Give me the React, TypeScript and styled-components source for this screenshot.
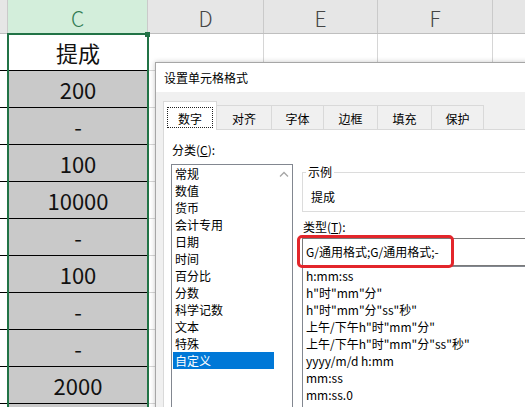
import React from 'react';
import styled, { createGlobalStyle, css } from 'styled-components';

const Global = createGlobalStyle`
  html, body { margin: 0; padding: 0; background: #fff; }
  body {
    width: 525px; height: 407px; overflow: hidden;
    font-family: "Noto Sans CJK SC", "Noto Sans", sans-serif;
  }
  * { box-sizing: border-box; }
`;

type ColKind = 'edge' | 'sel' | 'grid';
const COLS: { key: string; w: number; label: string; kind: ColKind }[] = [
  { key: 'B', w: 8, label: '', kind: 'edge' },
  { key: 'C', w: 140, label: 'C', kind: 'sel' },
  { key: 'D', w: 116, label: 'D', kind: 'grid' },
  { key: 'E', w: 114, label: 'E', kind: 'grid' },
  { key: 'F', w: 115, label: 'F', kind: 'grid' },
  { key: 'G', w: 120, label: '', kind: 'grid' },
];

const VALUES = ['提成', '200', '-', '100', '10000', '-', '100', '-', '-', '2000', ''];

const CATEGORIES = ['常规', '数值', '货币', '会计专用', '日期', '时间', '百分比', '分数', '科学记数', '文本', '特殊', '自定义'];
const FORMATS = [
  'h:mm:ss',
  'h"时"mm"分"',
  'h"时"mm"分"ss"秒"',
  '上午/下午h"时"mm"分"',
  '上午/下午h"时"mm"分"ss"秒"',
  'yyyy/m/d h:mm',
  'mm:ss',
  'mm:ss.0',
];
const TABS = [
  { label: '数字', w: 54 },
  { label: '对齐', w: 55 },
  { label: '字体', w: 52 },
  { label: '边框', w: 54 },
  { label: '填充', w: 54 },
  { label: '保护', w: 52 },
];

const Sheet = styled.div`
  position: relative;
  width: 525px;
  height: 407px;
  overflow: hidden;
  background: #fff;
`;

const HeaderRow = styled.div`
  display: flex;
  height: 34px;
  background: #e6e6e6;
  border-bottom: 1px solid #bfbfbf;
`;

const HeaderCell = styled.div<{ $w: number; $sel?: boolean }>`
  flex: 0 0 ${p => p.$w}px;
  height: 100%;
  border-right: 1px solid #cacaca;
  display: flex;
  justify-content: center;
  align-items: flex-end;
  padding-bottom: 1px;
  font-size: 21px;
  line-height: 28px;
  font-weight: 300;
  color: #454545;
  ${p =>
    p.$sel &&
    css`
      background: #d3eedb;
      color: #2f7a52;
    `}
`;

const Row = styled.div`
  display: flex;
  height: 37px;
`;

const Cell = styled.div<{ $w: number; $kind: ColKind; $title?: boolean }>`
  flex: 0 0 ${p => p.$w}px;
  height: 100%;
  display: flex;
  align-items: center;
  justify-content: center;
  font-size: 22px;
  line-height: 26px;
  color: #111;
  ${p =>
    p.$kind === 'edge' &&
    css`
      background: #fff;
      border-bottom: 1px solid #000;
    `}
  ${p =>
    p.$kind === 'sel' &&
    css`
      background: ${p.$title ? '#fff' : '#c9c9c9'};
      border-bottom: 1px solid #000;
    `}
  ${p =>
    p.$kind === 'grid' &&
    css`
      background: #fff;
      border-bottom: 1px solid #d6d6d6;
      border-right: 1px solid #d6d6d6;
    `}
`;

const Selection = styled.div`
  position: absolute;
  left: 7px;
  top: 33px;
  width: 142px;
  height: 390px;
  border: 2px solid #217346;
  pointer-events: none;
`;

const FillHandle = styled.div`
  position: absolute;
  left: 145px;
  top: 32px;
  width: 5px;
  height: 5px;
  background: #217346;
`;

/* ---------- dialog ---------- */

const Dialog = styled.div`
  position: absolute;
  left: 155px;
  top: 62px;
  width: 420px;
  height: 380px;
  background: #f0f0f0;
  border: 1px solid #a6a6a6;
  box-shadow: 0 0 5px rgba(0, 0, 0, 0.22);
  display: flex;
  flex-direction: column;
  font-size: 12px;
  color: #000;
`;

const TitleBar = styled.div`
  height: 29px;
  flex: 0 0 29px;
  background: #fff;
  padding-left: 8px;
  display: flex;
  align-items: center;
  line-height: 16px;
`;

const Body = styled.div`
  flex: 1;
  display: flex;
  flex-direction: column;
  padding: 9px 0 0 7px;
`;

const TabBar = styled.div`
  display: flex;
  align-items: flex-end;
  height: 28px;
  position: relative;
  z-index: 2;
`;

const Tab = styled.div<{ $w: number; $active?: boolean; $first?: boolean }>`
  flex: 0 0 ${p => p.$w}px;
  height: 24px;
  background: #f0f0f0;
  border-top: 1px solid #d9d9d9;
  border-right: 1px solid #d9d9d9;
  ${p => p.$first && css`border-left: 1px solid #d9d9d9;`}
  display: flex;
  justify-content: center;
  align-items: center;
  padding-top: 3px;
  line-height: 16px;
  ${p =>
    p.$active &&
    css`
      height: 29px;
      margin-bottom: -1px;
      background: #fff;
      padding: 5px 3px 2px;
      align-items: stretch;
    `}
`;

const FocusRing = styled.span`
  flex: 1;
  display: flex;
  justify-content: center;
  align-items: center;
  border: 1px dotted #222;
  padding-top: 2px;
`;

const Panel = styled.div`
  flex: 1;
  display: flex;
  gap: 9px;
  background: #fff;
  border: 1px solid #d9d9d9;
  padding-left: 7px;
  overflow: hidden;
`;

const LeftCol = styled.div`
  flex: 0 0 122px;
  display: flex;
  flex-direction: column;
`;

const FieldLabel = styled.div<{ $top: number }>`
  margin-top: ${p => p.$top}px;
  line-height: 16px;
  padding-left: 1px;
  white-space: nowrap;
`;

const ListBox = styled.div`
  margin-top: 6px;
  flex: 1;
  display: flex;
  background: #fff;
  border: 1px solid #828790;
`;

const Items = styled.div`
  flex: 1;
  display: flex;
  flex-direction: column;
`;

const CatItem = styled.div<{ $sel?: boolean }>`
  height: 17px;
  line-height: 17px;
  margin: 0 1px;
  padding-left: 2px;
  white-space: nowrap;
  ${p =>
    p.$sel &&
    css`
      background: #0078d7;
      color: #fff;
    `}
`;

const ScrollBar = styled.div`
  flex: 0 0 17px;
  display: flex;
  justify-content: center;
  padding-top: 6px;
  background: #fff;
`;

const RightCol = styled.div`
  flex: 0 0 240px;
  display: flex;
  flex-direction: column;
`;

const Group = styled.fieldset`
  margin: 34px 0 0 0;
  padding: 9px 0 6px 8px;
  border: 1px solid #dcdcdc;
  min-width: 0;
`;

const Legend = styled.legend`
  margin-left: -5px;
  padding: 0 2px;
  line-height: 16px;
`;

const Sample = styled.div`
  line-height: 16px;
`;

const InputWrap = styled.div`
  position: relative;
  margin-top: 3px;
`;

const TypeInput = styled.div`
  height: 28px;
  border: 1px solid #7a7a7a;
  background: #fff;
  padding-left: 3px;
  line-height: 26px;
  white-space: nowrap;
`;

const RedMark = styled.div`
  position: absolute;
  left: -5px;
  top: -3px;
  width: 157px;
  height: 33px;
  border: 3px solid #e3262b;
  border-radius: 5px;
  pointer-events: none;
`;

const FormatList = styled.div`
  flex: 1;
  background: #fff;
  border: 1px solid #828790;
  display: flex;
  flex-direction: column;
`;

const FormatItem = styled.div`
  height: 17px;
  line-height: 17px;
  padding-left: 3px;
  white-space: nowrap;
`;

function UpChevron() {
  return (
    <svg width="10" height="6" viewBox="0 0 10 6">
      <polyline points="1,5.5 5,1.5 9,5.5" fill="none" stroke="#a6a6a6" strokeWidth="1.3" />
    </svg>
  );
}

export default function App() {
  return (
    <>
      <Global />
      <Sheet>
        <HeaderRow>
          {COLS.map(c => (
            <HeaderCell key={c.key} $w={c.w} $sel={c.kind === 'sel'}>
              {c.label}
            </HeaderCell>
          ))}
        </HeaderRow>
        {VALUES.map((v, i) => (
          <Row key={i}>
            {COLS.map(c => (
              <Cell key={c.key} $w={c.w} $kind={c.kind} $title={i === 0}>
                {c.kind === 'sel' ? v : ''}
              </Cell>
            ))}
          </Row>
        ))}
        <Selection />
        <FillHandle />

        <Dialog>
          <TitleBar>设置单元格格式</TitleBar>
          <Body>
            <TabBar>
              {TABS.map((t, i) => (
                <Tab key={t.label} $w={t.w} $active={i === 0} $first={i === 0}>
                  {i === 0 ? <FocusRing>{t.label}</FocusRing> : t.label}
                </Tab>
              ))}
            </TabBar>
            <Panel>
              <LeftCol>
                <FieldLabel $top={12}>
                  分类(<u>C</u>):
                </FieldLabel>
                <ListBox>
                  <Items>
                    {CATEGORIES.map(c => (
                      <CatItem key={c} $sel={c === '自定义'}>
                        {c}
                      </CatItem>
                    ))}
                  </Items>
                  <ScrollBar>
                    <UpChevron />
                  </ScrollBar>
                </ListBox>
              </LeftCol>
              <RightCol>
                <Group>
                  <Legend>示例</Legend>
                  <Sample>提成</Sample>
                </Group>
                <FieldLabel $top={7}>
                  类型(<u>T</u>):
                </FieldLabel>
                <InputWrap>
                  <TypeInput>G/通用格式;G/通用格式;-</TypeInput>
                  <RedMark />
                </InputWrap>
                <FormatList>
                  {FORMATS.map(f => (
                    <FormatItem key={f}>{f}</FormatItem>
                  ))}
                </FormatList>
              </RightCol>
            </Panel>
          </Body>
        </Dialog>
      </Sheet>
    </>
  );
}
